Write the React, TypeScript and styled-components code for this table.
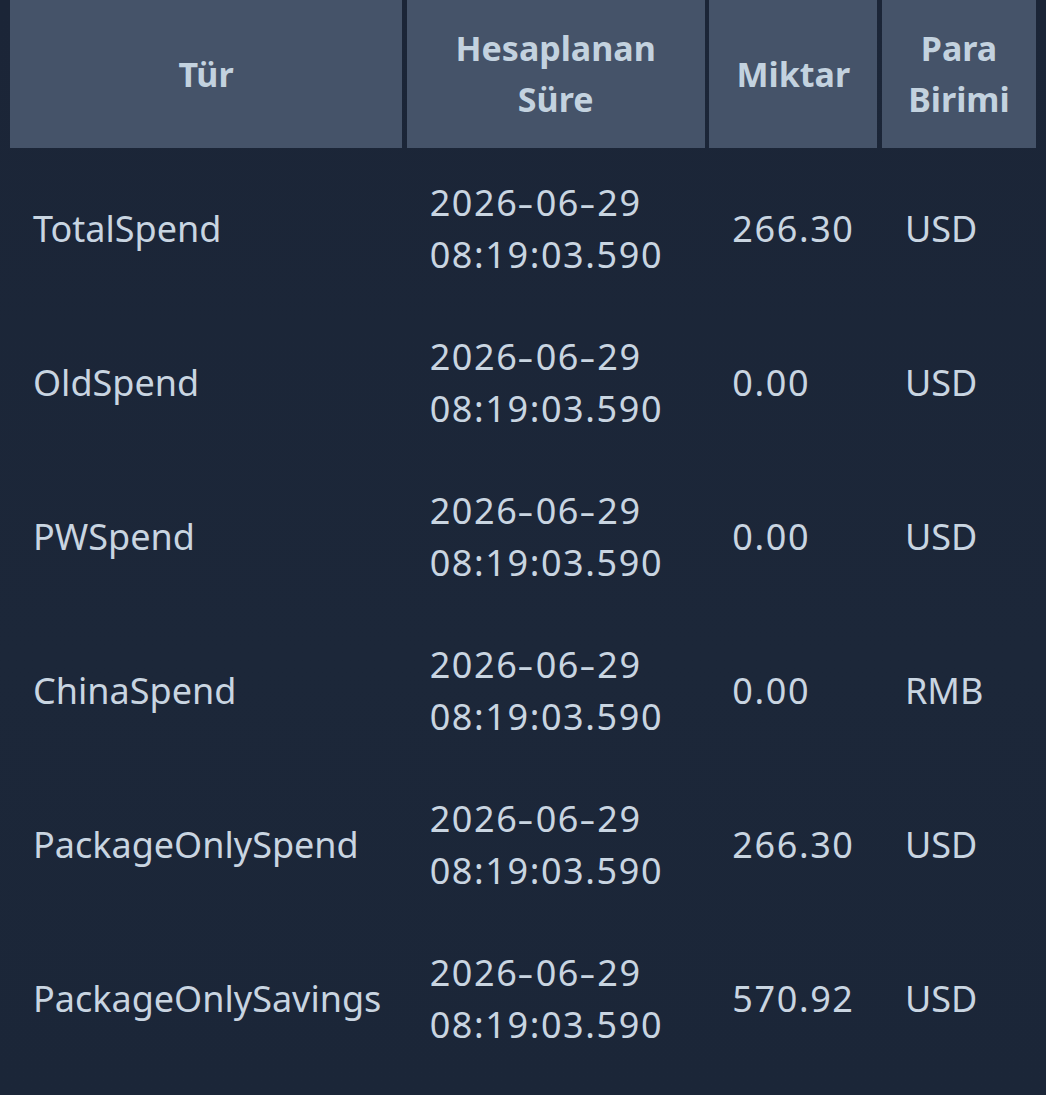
import React from "react";
import styled, { createGlobalStyle } from "styled-components";

const GlobalStyle = createGlobalStyle`
  html, body {
    margin: 0;
    padding: 0;
    background: #1b2638;
  }
  body {
    font-family: "Noto Sans", "Liberation Sans", sans-serif;
  }
`;

const Page = styled.div`
  width: 1046px;
  height: 1095px;
  overflow: hidden;
  background: linear-gradient(180deg, #1b2537 0%, #1c2739 60%, #1b2638 100%);
  padding: 0 10px;
  box-sizing: border-box;
`;

const Table = styled.div`
  display: grid;
  grid-template-columns: 392px 298px 168px 154px;
  column-gap: 4.67px;
`;

const HeadCell = styled.div`
  height: 148px;
  background: #455369;
  color: #c3d2df;
  font-weight: 700;
  font-size: 34px;
  line-height: 51px;
  display: flex;
  align-items: center;
  justify-content: center;
  text-align: center;
  margin-bottom: 4px;
`;

const Cell = styled.div<{ $numeric?: boolean }>`
  height: 154px;
  display: flex;
  align-items: center;
  padding: 0 0 0 23px;
  color: #c9d5e1;
  font-size: 36px;
  line-height: 52px;
  white-space: nowrap;
  letter-spacing: ${(p) => (p.$numeric ? "1.6px" : "0")};
`;

const DateBox = styled.div`
  display: flex;
  flex-direction: column;
`;

const Dash = styled.span`
  display: inline-block;
  margin: 0 2px;
  transform: scaleX(1.4);
`;

const rows = [
  ["TotalSpend", "266.30", "USD"],
  ["OldSpend", "0.00", "USD"],
  ["PWSpend", "0.00", "USD"],
  ["ChinaSpend", "0.00", "RMB"],
  ["PackageOnlySpend", "266.30", "USD"],
  ["PackageOnlySavings", "570.92", "USD"],
];

export default function App() {
  return (
    <>
      <GlobalStyle />
      <Page>
        <Table>
          <HeadCell>Tür</HeadCell>
          <HeadCell>
            Hesaplanan
            <br />
            Süre
          </HeadCell>
          <HeadCell>Miktar</HeadCell>
          <HeadCell>
            Para
            <br />
            Birimi
          </HeadCell>
          {rows.map(([type, amount, cur]) => (
            <React.Fragment key={type}>
              <Cell>{type}</Cell>
              <Cell $numeric>
                <DateBox>
                  <span>
                    2026<Dash>-</Dash>06<Dash>-</Dash>29
                  </span>
                  <span>08:19:03.590</span>
                </DateBox>
              </Cell>
              <Cell $numeric>{amount}</Cell>
              <Cell>{cur}</Cell>
            </React.Fragment>
          ))}
        </Table>
      </Page>
    </>
  );
}
